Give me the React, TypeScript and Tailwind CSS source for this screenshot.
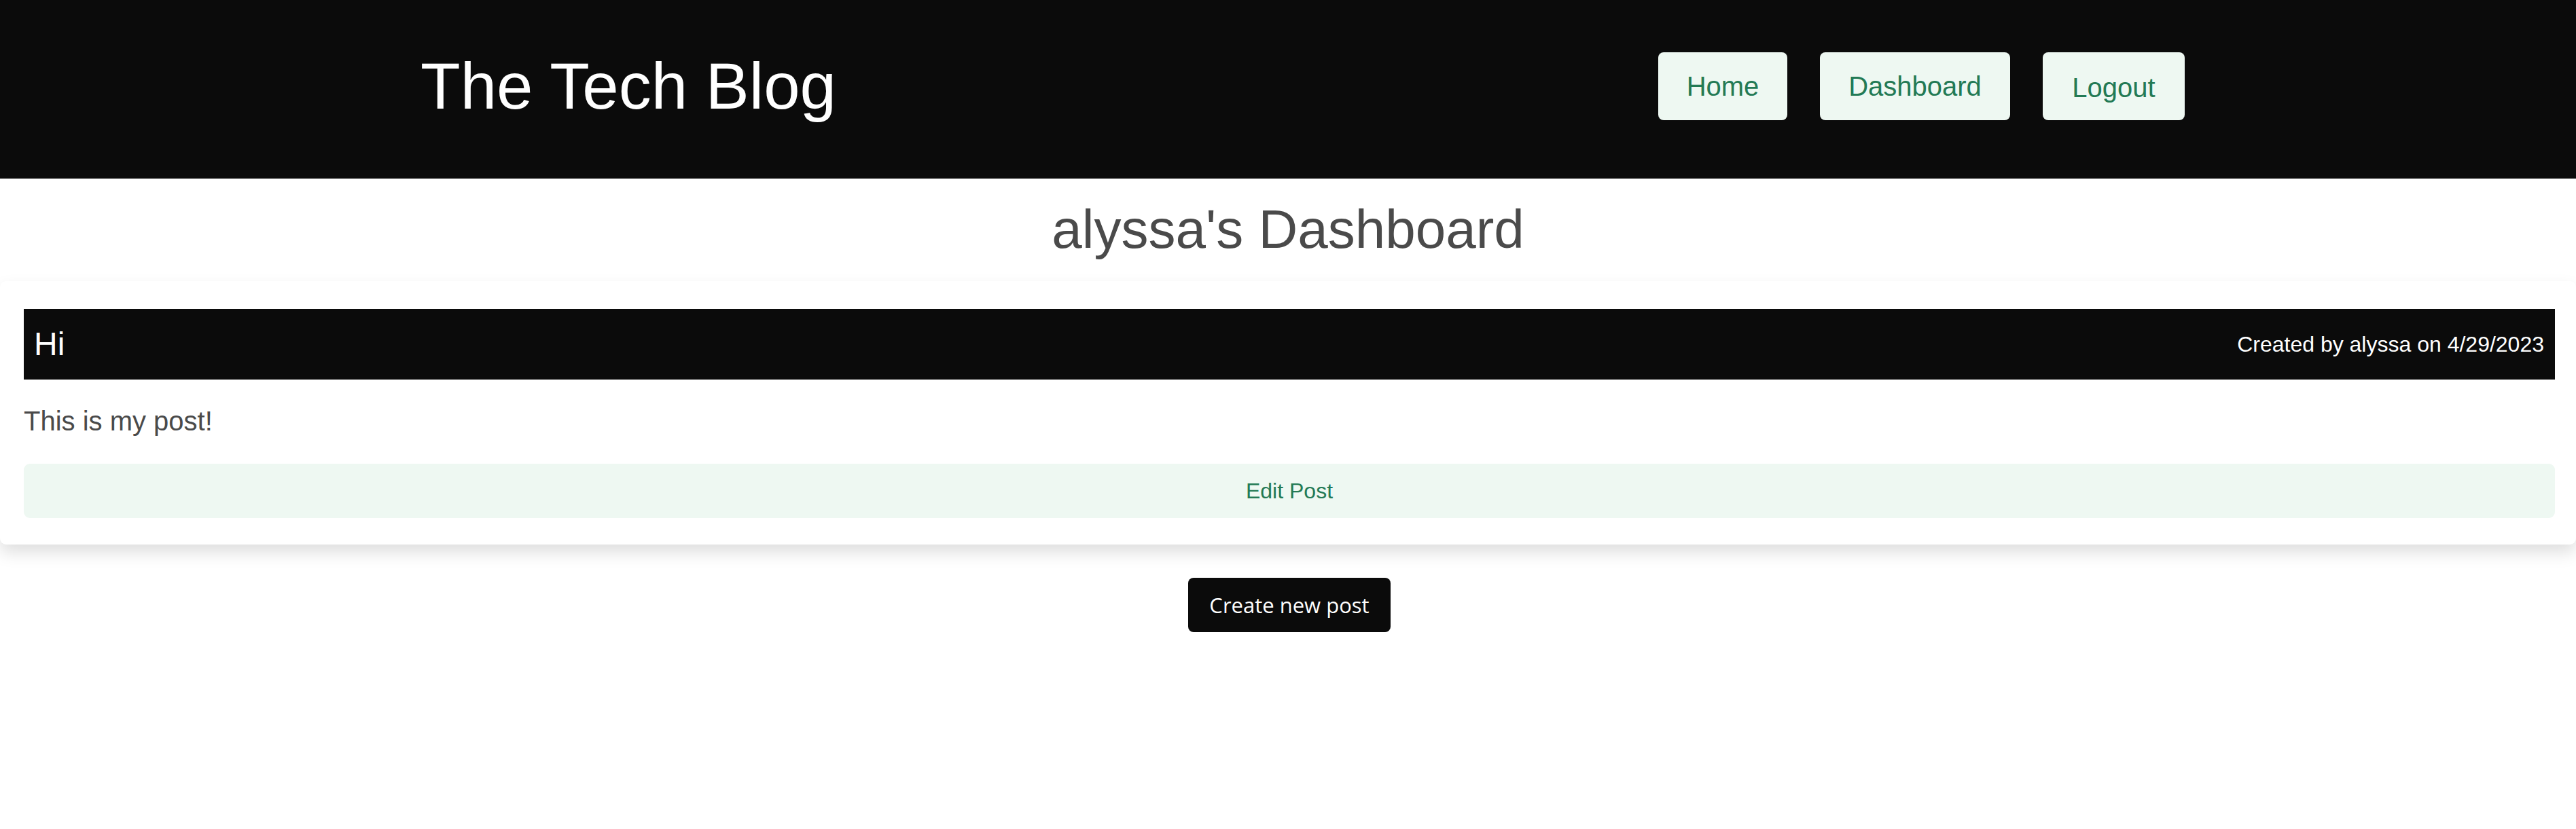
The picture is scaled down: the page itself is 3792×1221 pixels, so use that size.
import React from "react";

const arial = { fontFamily: '"Liberation Sans", Arial, sans-serif' };

export default function App() {
  return (
    <div className="min-h-[1221px] bg-white" style={arial}>
      <header className="flex h-[263px] items-start justify-between bg-[#0b0b0b] pl-[619px] pr-[576px]">
        <h1 className="mt-[79px] text-[96px] font-normal leading-none text-white">The Tech Blog</h1>
        <nav className="mt-[77px] flex gap-[48px]">
          <a className="flex h-[100px] w-[190px] items-center justify-center rounded-[8px] bg-[#eef8f2] text-[40px] leading-none text-[#237a55]">
            Home
          </a>
          <a className="flex h-[100px] w-[280px] items-center justify-center rounded-[8px] bg-[#eef8f2] text-[40px] leading-none text-[#237a55]">
            Dashboard
          </a>
          <button className="flex h-[100px] w-[209px] items-center justify-center rounded-[8px] bg-[#eef8f2] pt-[4px] text-[40px] leading-none text-[#237a55]">
            Logout
          </button>
        </nav>
      </header>

      <section className="h-[151px] pt-[35px] text-center">
        <h2 className="text-[80px] font-normal leading-none text-[#4a4a4a]">alyssa's Dashboard</h2>
      </section>

      <article className="rounded-[9px] bg-white pb-[39px] pl-[35px] pr-[31px] pt-[41px] shadow-[0_12px_24px_rgba(0,0,0,0.13)]">
        <div className="flex h-[104px] items-center justify-between bg-[#0b0b0b] pl-[15px] pr-[16px]">
          <span className="text-[48px] leading-none text-white">Hi</span>
          <span className="text-[32px] leading-none text-white">Created by alyssa on 4/29/2023</span>
        </div>
        <p className="mt-[41px] text-[40px] leading-none text-[#4a4a4a]">This is my post!</p>
        <button className="mt-[43px] flex h-[80px] w-full items-center justify-center rounded-[9px] bg-[#eef8f2] text-[32px] leading-none text-[#237a55]">
          Edit Post
        </button>
      </article>

      <div className="mt-[49px] flex justify-center">
        <button
          className="ml-[4px] flex h-[80px] w-[298px] items-center justify-center rounded-[8px] bg-[#0b0b0b] text-[31px] leading-none text-white"
          style={{ fontFamily: '"Open Sans", "Noto Sans", sans-serif' }}
        >
          Create new post
        </button>
      </div>
    </div>
  );
}
